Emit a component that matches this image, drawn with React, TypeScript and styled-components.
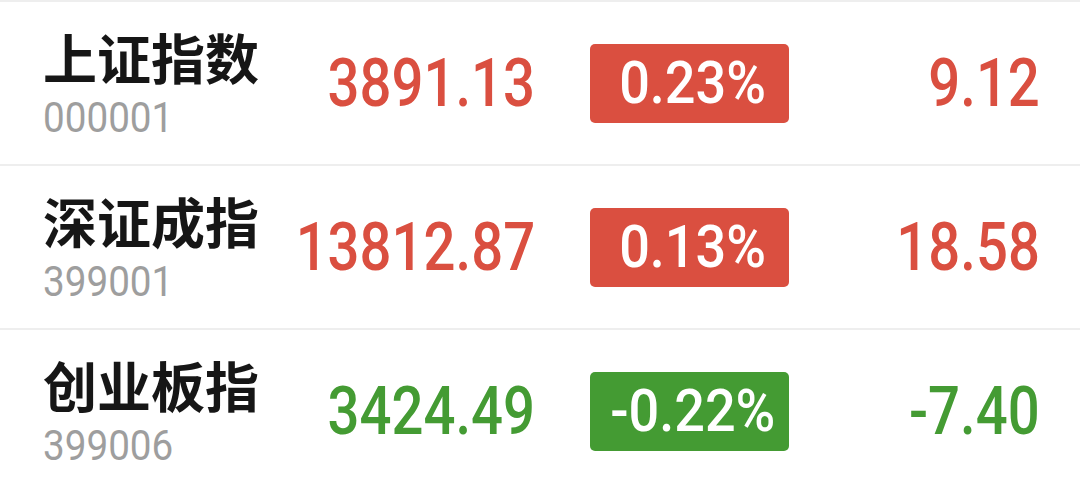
import React from "react";
import styled, { createGlobalStyle } from "styled-components";

const Global = createGlobalStyle`
  html, body { margin: 0; padding: 0; background: #ffffff; }
  body { font-family: Roboto, "Noto Sans CJK SC", sans-serif; }
`;

const RED = "#da4f40";
const GREEN = "#449b33";

type Dir = "up" | "down";

const List = styled.div`
  display: flex;
  flex-direction: column;
  width: 1080px;
`;

const Row = styled.div`
  display: flex;
  align-items: center;
  box-sizing: border-box;
  height: 164px;
  border-top: 2px solid #eeeeee;
  padding: 0 40px 0 43px;
`;

const NameBlock = styled.div`
  width: 250px;
  flex: none;
  display: flex;
  flex-direction: column;
  align-items: flex-start;
`;

const Name = styled.div`
  font-family: "Noto Sans CJK SC", sans-serif;
  font-weight: 700;
  font-size: 54px;
  line-height: 60px;
  color: #161616;
  white-space: nowrap;
`;

const Code = styled.div`
  font-family: Roboto, sans-serif;
  font-weight: 400;
  font-size: 42px;
  line-height: 42px;
  color: #9e9e9e;
  transform: scaleX(0.92);
  transform-origin: left center;
  margin-top: 10px;
`;

const Num = styled.span<{ $dir: Dir }>`
  display: inline-block;
  flex: none;
  font-family: Roboto, sans-serif;
  font-weight: 500;
  font-size: 67px;
  line-height: 70px;
  color: ${(p) => (p.$dir === "up" ? RED : GREEN)};
  transform: scaleX(0.84);
  transform-origin: right center;
  white-space: nowrap;
`;

const PriceCell = styled.div`
  width: 242px;
  flex: none;
  display: flex;
  justify-content: flex-end;
`;

const Badge = styled.div<{ $dir: Dir }>`
  margin-left: 55px;
  width: 199px;
  height: 79px;
  flex: none;
  border-radius: 5px;
  background: ${(p) => (p.$dir === "up" ? RED : GREEN)};
  display: flex;
  align-items: center;
  justify-content: center;
  padding-left: 6px;
  box-sizing: border-box;
`;

const BadgeText = styled.span`
  display: inline-block;
  flex: none;
  font-family: Roboto, sans-serif;
  font-weight: 500;
  font-size: 60px;
  line-height: 60px;
  color: #ffffff;
  transform: scaleX(0.9);
  white-space: nowrap;
`;

const ChangeCell = styled.div`
  width: 251px;
  flex: none;
  display: flex;
  justify-content: flex-end;
`;

const data: { name: string; code: string; price: string; pct: string; chg: string; dir: Dir }[] = [
  { name: "上证指数", code: "000001", price: "3891.13", pct: "0.23%", chg: "9.12", dir: "up" },
  { name: "深证成指", code: "399001", price: "13812.87", pct: "0.13%", chg: "18.58", dir: "up" },
  { name: "创业板指", code: "399006", price: "3424.49", pct: "-0.22%", chg: "-7.40", dir: "down" },
];

export default function App() {
  return (
    <>
      <Global />
      <List>
        {data.map((d) => (
          <Row key={d.code}>
            <NameBlock>
              <Name>{d.name}</Name>
              <Code>{d.code}</Code>
            </NameBlock>
            <PriceCell>
              <Num $dir={d.dir}>{d.price}</Num>
            </PriceCell>
            <Badge $dir={d.dir}>
              <BadgeText>{d.pct}</BadgeText>
            </Badge>
            <ChangeCell>
              <Num $dir={d.dir}>{d.chg}</Num>
            </ChangeCell>
          </Row>
        ))}
      </List>
    </>
  );
}
